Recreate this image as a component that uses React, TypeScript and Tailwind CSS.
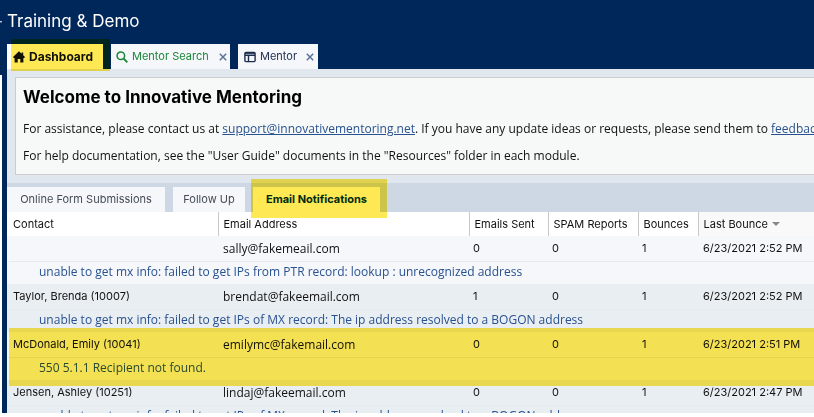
import { Fragment } from "react";

type BounceRecord = {
  contact: string;
  email: string;
  sent: number;
  spam: number;
  bounces: number;
  last: string;
  detail: string;
};

const records: BounceRecord[] = [
  {
    contact: "",
    email: "sally@fakemeail.com",
    sent: 0,
    spam: 0,
    bounces: 1,
    last: "6/23/2021 2:52 PM",
    detail: "unable to get mx info: failed to get IPs from PTR record: lookup : unrecognized address",
  },
  {
    contact: "Taylor, Brenda (10007)",
    email: "brendat@fakeemail.com",
    sent: 1,
    spam: 0,
    bounces: 1,
    last: "6/23/2021 2:52 PM",
    detail: "unable to get mx info: failed to get IPs of MX record: The ip address resolved to a BOGON address",
  },
  {
    contact: "McDonald, Emily (10041)",
    email: "emilymc@fakemail.com",
    sent: 0,
    spam: 0,
    bounces: 1,
    last: "6/23/2021 2:51 PM",
    detail: "550 5.1.1 Recipient not found.",
  },
  {
    contact: "Jensen, Ashley (10251)",
    email: "lindaj@fakeemail.com",
    sent: 0,
    spam: 0,
    bounces: 1,
    last: "6/23/2021 2:47 PM",
    detail: "unable to get mx info: failed to get IPs of MX record: The ip address resolved to a BOGON address",
  },
];

function HomeIcon() {
  return (
    <svg className="size-3 shrink-0" viewBox="0 0 12 12" fill="currentColor" aria-hidden="true">
      <path d="M6 0.3 L8.6 2.8 V1.4 H10.2 V4.3 L12 6 L11.2 6.9 H10.4 V11.6 H7.3 V8 H4.7 V11.6 H1.6 V6.9 H0.8 L0 6 Z" />
    </svg>
  );
}

function SearchIcon() {
  return (
    <svg className="size-3 shrink-0" viewBox="0 0 12 12" fill="none" stroke="currentColor" aria-hidden="true">
      <circle cx="4.8" cy="4.8" r="3.8" strokeWidth="1.5" />
      <path d="M7.7 7.7 L11.3 11.3" strokeWidth="1.9" />
    </svg>
  );
}

function LayoutIcon() {
  return (
    <svg className="size-3 shrink-0" viewBox="0 0 12 12" fill="none" stroke="currentColor" strokeWidth="1.4" aria-hidden="true">
      <rect x="0.9" y="1.4" width="10.2" height="9.2" rx="1" />
      <path d="M1 4.2 H11 M4.5 4.2 V10.5" />
      <path d="M1 2.4 H11" strokeWidth="1" />
    </svg>
  );
}

function CloseButton({ label }: { label: string }) {
  return (
    <button type="button" aria-label={label} className="ml-auto text-[#5b7399]">
      <svg className="size-2" viewBox="0 0 8 8" fill="none" stroke="currentColor" strokeWidth="1.5" aria-hidden="true">
        <path d="M0.8 0.8 L7.2 7.2 M7.2 0.8 L0.8 7.2" />
      </svg>
    </button>
  );
}

export default function App() {
  return (
    <div className="overflow-hidden bg-white font-['Inter','Liberation_Sans',sans-serif] text-[11px] text-[#111111]">
      <div className="relative h-[413px] overflow-hidden bg-[#002759]">
        <header className="flex h-11 items-center overflow-hidden whitespace-nowrap text-[17px] text-white">
          <span className="flex w-[7px] shrink-0 justify-end overflow-hidden pr-1 text-[#c5d0de]">-</span>
          <h1>Training &amp; Demo</h1>
        </header>

        <div className="flex">
          <div className="mt-[31px] w-[2px] shrink-0 bg-white" />
          <div className="ml-[5px] min-w-0 grow">
            <nav className="flex h-[25px] gap-2 whitespace-nowrap">
              <div className="relative flex w-24 bg-white">
                <button type="button" className="flex items-center gap-1 pl-1.5 text-xs font-bold">
                  <HomeIcon />
                  Dashboard
                </button>
                <div className="pointer-events-none absolute -top-[5px] left-1 h-8 w-[99px] bg-[#fee854] mix-blend-multiply" />
              </div>
              <div className="flex w-[119px] items-center bg-[#f5f7fb] pr-[3px] pl-[5px] text-[#1d8639]">
                <button type="button" className="flex items-center gap-1">
                  <SearchIcon />
                  Mentor Search
                </button>
                <CloseButton label="Close Mentor Search" />
              </div>
              <div className="flex w-20 items-center bg-[#f5f7fb] pr-1 pl-1.5 text-[#1d2d4c]">
                <button type="button" className="flex items-center gap-1">
                  <LayoutIcon />
                  Mentor
                </button>
                <CloseButton label="Close Mentor" />
              </div>
            </nav>

            <main className="bg-[#e1e7ef]">
              <div className="pt-2 pb-2 pl-2">
                <section className="overflow-hidden border border-r-0 border-[#cccccc] bg-[#f7f9f8] pt-[7px] pb-[11px] pl-[7px] whitespace-nowrap">
                  <h2 className="text-[17px] leading-6 font-bold text-black">Welcome to Innovative Mentoring</h2>
                  <p className="mt-3 font-['Open_Sans',sans-serif] text-xs leading-[15px]">
                    For assistance, please contact us at{" "}
                    <a href="mailto:support@innovativementoring.net" className="text-[#28518f] underline">
                      support@innovativementoring.net
                    </a>
                    . If you have any update ideas or requests, please send them to{" "}
                    <a href="#feedback" className="text-[#28518f] underline">
                      feedback
                    </a>
                  </p>
                  <p className="mt-3 font-['Open_Sans',sans-serif] text-xs leading-[15px]">
                    For help documentation, see the "User Guide" documents in the "Resources" folder in each module.
                  </p>
                </section>
              </div>

              <div className="flex h-[29px] gap-2 bg-[#ced8e4] pt-1 whitespace-nowrap text-[#444b55]">
                <button type="button" className="w-[158px] bg-[#f5f7fb]">
                  Online Form Submissions
                </button>
                <button type="button" className="w-[72px] bg-[#f5f7fb]">
                  Follow Up
                </button>
                <div className="relative flex w-[127px] justify-center bg-white">
                  <button type="button" className="font-bold text-[#002e2b]">
                    Email Notifications
                  </button>
                  <div className="pointer-events-none absolute -top-2 -left-0.5 z-10 h-[39px] w-[136px] bg-[#fee854] mix-blend-multiply" />
                </div>
              </div>

              <table className="w-full table-fixed border-collapse whitespace-nowrap">
                <colgroup>
                  <col className="w-[211px]" />
                  <col />
                  <col className="w-[79px]" />
                  <col className="w-[90px]" />
                  <col className="w-[60px]" />
                  <col className="w-[116px]" />
                </colgroup>
                <thead>
                  <tr className="h-6 bg-white text-left">
                    <th className="p-0 pl-1.5 font-normal">Contact</th>
                    <th className="border-l border-[#c8c8c8] p-0 pl-[5px] font-normal">Email Address</th>
                    <th className="border-l border-[#c8c8c8] p-0 pl-[5px] font-normal">Emails Sent</th>
                    <th className="border-l border-[#c8c8c8] p-0 pl-[5px] font-normal">SPAM Reports</th>
                    <th className="border-l border-[#c8c8c8] p-0 pl-[5px] font-normal">Bounces</th>
                    <th className="border-l border-[#c8c8c8] bg-[#f9f9f9] p-0 pl-[5px] font-normal">
                      <span className="flex items-center gap-1">
                        Last Bounce
                        <svg className="h-1 w-2" viewBox="0 0 8 4" fill="#888888" aria-hidden="true">
                          <path d="M0 0 H8 L4 4 Z" />
                        </svg>
                      </span>
                    </th>
                  </tr>
                </thead>
                <tbody>
                  {records.map((r, i) => {
                    const tone = i % 2 ? "bg-[#e9eef2]" : "bg-[#f5f7fb]";
                    return (
                      <Fragment key={r.email}>
                        <tr className={`h-[25px] ${tone}`}>
                          <td className="p-0 pl-1.5">{r.contact}</td>
                          <td className="p-0 pl-[5px] font-['Open_Sans',sans-serif] text-xs">{r.email}</td>
                          <td className="p-0 pl-1">{r.sent}</td>
                          <td className="p-0 pl-1">{r.spam}</td>
                          <td className="p-0 pl-1">{r.bounces}</td>
                          <td className="p-0 pl-[5px]">{r.last}</td>
                        </tr>
                        <tr className={`h-[23px] ${tone}`}>
                          <td colSpan={6} className="p-0 pl-0.5 text-[#28518f]">
                            <div className="h-[23px] border-t border-[#e6e9ed] pl-[30px] font-['Open_Sans',sans-serif] text-xs leading-5">
                              {r.detail}
                            </div>
                          </td>
                        </tr>
                      </Fragment>
                    );
                  })}
                </tbody>
              </table>
            </main>
          </div>
        </div>
        <div className="pointer-events-none absolute top-[328px] right-0 left-[9px] h-[58px] bg-[#fee854] mix-blend-multiply" />
      </div>
      <div className="h-1" />
    </div>
  );
}
